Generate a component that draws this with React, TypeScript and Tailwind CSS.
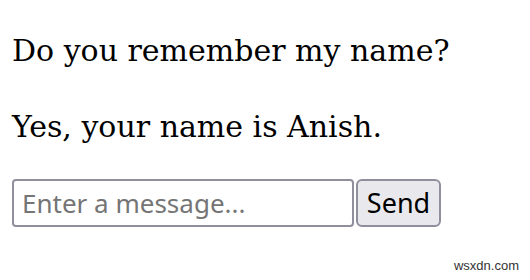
import React from "react";

export default function App() {
  return (
    <div className="relative w-[530px] h-[280px] bg-white overflow-hidden">
      <div className="flex flex-col pl-[12px] pt-[33px]">
        <p className="text-[30px] leading-[36px] text-black font-['DejaVu_Serif',serif]">
          Do you remember my name?
        </p>
        <p className="mt-[40px] text-[30px] leading-[36px] text-black font-['DejaVu_Serif',serif]">
          Yes, your name is Anish.
        </p>
        <div className="mt-[34px] flex items-stretch gap-[2px] h-[48px]">
          <input
            className="w-[342px] h-[48px] border-2 border-[#8f8f9d] rounded-[4px] px-[8px] text-[26px] text-black placeholder:text-[#757575] bg-white outline-none font-['Noto_Sans',sans-serif]"
            placeholder="Enter a message..."
          />
          <button className="w-[85px] h-[48px] border-2 border-[#8f8f9d] rounded-[6px] bg-[#e9e9ed] text-[27px] text-black font-['Noto_Sans',sans-serif]">
            Send
          </button>
        </div>
      </div>
      <div className="absolute right-[11px] bottom-[7px] text-[13px] leading-[14px] text-[#333] font-['Liberation_Sans',sans-serif]">
        wsxdn.com
      </div>
    </div>
  );
}
